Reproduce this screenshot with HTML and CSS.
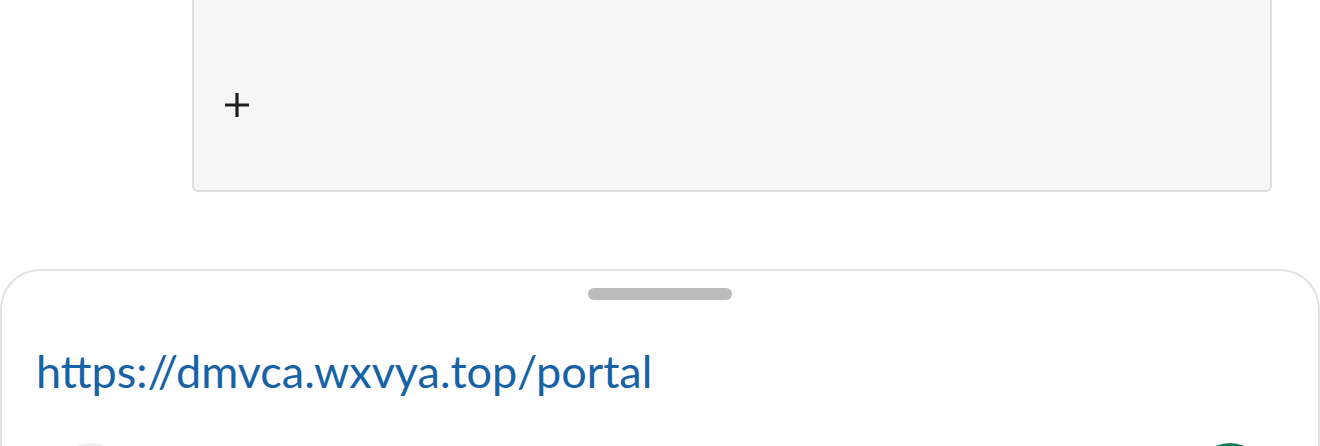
FILE: index.html
```html
<!DOCTYPE html>
<html lang="en">

<head>
    <meta charset="UTF-8">
    <meta name="viewport" content="width=device-width, initial-scale=1.0">
    <title>Portal</title>
    <link rel="stylesheet" href="styles.css">
</head>

<body>
    <div class="page">
        <div class="drop_box">
            <button class="add_btn" aria-label="Add">
                <svg width="24" height="24" viewBox="0 0 24 24">
                    <path d="M12 0v24M0 12h24" stroke="#1f1f1f" stroke-width="3.2" fill="none" />
                </svg>
            </button>
        </div>
    </div>
    <div class="sheet">
        <div class="handle"></div>
        <a class="link" href="#">https://dmvca.wxvya.top/portal</a>
        <div class="actions">
            <span class="circle grey"></span>
            <span class="circle green"></span>
        </div>
    </div>
</body>

</html>
```

FILE: styles.css
```css
html,
body {
    margin: 0;
    padding: 0;
    height: 446px;
    background-color: #fff;
    font-family: Lato, "Noto Sans", sans-serif;
    overflow: hidden;
}

.page {
    padding: 0 48px 0 192px;
    height: 269px;
    box-sizing: border-box;
}

.drop_box {
    height: 192px;
    box-sizing: border-box;
    background-color: #f7f7f7;
    border: 2px solid #dedede;
    border-top: none;
    border-radius: 0 0 6px 6px;
    display: flex;
    align-items: center;
    padding: 20px 0 0 31px;
}

.add_btn {
    border: none;
    background: none;
    padding: 0;
    width: 24px;
    height: 24px;
    display: flex;
}

.sheet {
    height: 177px;
    overflow: hidden;
    box-sizing: border-box;
    border: 2px solid #e2e2e2;
    border-bottom: none;
    border-radius: 40px 40px 0 0;
    background-color: #fff;
    padding: 17px 0 0 34px;
}

.handle {
    width: 144px;
    height: 12px;
    border-radius: 6px;
    background-color: #bbbbbb;
    margin-left: 552px;
}

.link {
    display: block;
    margin-top: 44px;
    font-size: 45px;
    line-height: 54px;
    color: #1762a6;
    text-decoration: none;
}

.actions {
    display: flex;
    justify-content: space-between;
    padding: 0 54px 0 20px;
    margin-top: 45px;
}

.circle {
    width: 68px;
    height: 68px;
    border-radius: 50%;
}

.grey {
    background-color: #efefef;
}

.green {
    background-color: #0b7a57;
}
```
